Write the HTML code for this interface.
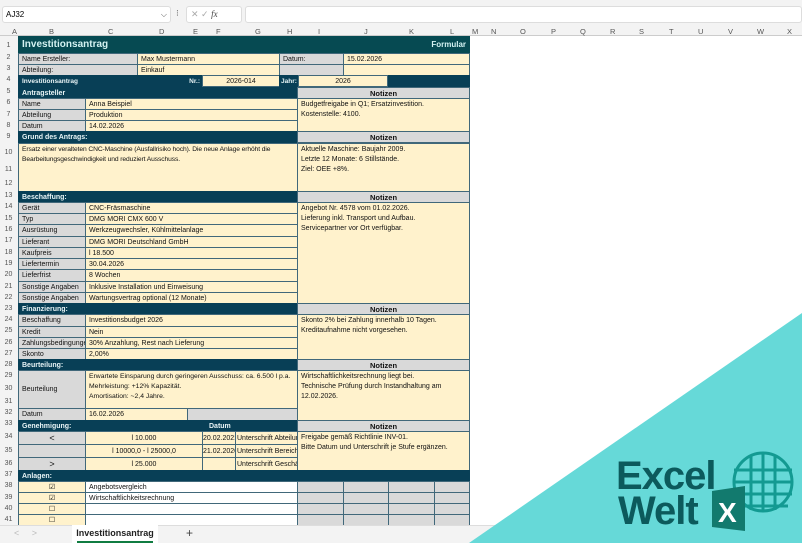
<!DOCTYPE html>
<html><head><meta charset="utf-8"><style>
*{margin:0;padding:0;box-sizing:border-box}
body{width:802px;height:543px;overflow:hidden;background:#fff;font-family:"Liberation Sans",sans-serif;position:relative}
.a{position:absolute}
.c{position:absolute;border:1px solid #41687a;font-size:7px;color:#111;padding:1px 3px;line-height:10px;white-space:nowrap;overflow:hidden}
.y{background:#fff2cc}.g{background:#d9d9d9}.w{background:#fff}
.d{background:#083f56;color:#e8f4f6;font-weight:bold;border-color:#083f56}
.n{text-align:center;font-weight:bold;font-size:7.5px}
.ce{text-align:center}
.rh{position:absolute;left:0;width:17px;font-size:7px;color:#555;text-align:center}
.ch{position:absolute;top:27px;font-size:7.5px;color:#555}
</style></head><body>
<div class="a" style="left:0;top:0;width:802px;height:36px;background:#f3f3f3"></div>
<div class="a" style="left:2px;top:6px;width:169px;height:17px;background:#fff;border:1px solid #ddd;border-radius:3px;font-size:8px;padding:3px 3px">AJ32<span style="float:right;color:#555">⌵</span></div>
<div class="a" style="left:176px;top:8px;font-size:9px;color:#666">⁝</div>
<div class="a" style="left:186px;top:6px;width:56px;height:17px;background:#fff;border:1px solid #ddd;border-radius:3px;font-size:9px;color:#aaa;padding:2px 4px">✕ ✓ <i style="color:#444;font-family:'Liberation Serif'">fx</i></div>
<div class="a" style="left:245px;top:6px;width:557px;height:17px;background:#fff;border:1px solid #ddd;border-radius:3px"></div>
<div class="a" style="left:0;top:35px;width:802px;height:1px;background:#ccc"></div>
<div class="ch" style="left:12px">A</div><div class="ch" style="left:49px">B</div><div class="ch" style="left:108px">C</div><div class="ch" style="left:159px">D</div><div class="ch" style="left:193px">E</div><div class="ch" style="left:216px">F</div><div class="ch" style="left:255px">G</div><div class="ch" style="left:287px">H</div><div class="ch" style="left:318px">I</div><div class="ch" style="left:364px">J</div><div class="ch" style="left:409px">K</div><div class="ch" style="left:450px">L</div><div class="ch" style="left:472px">M</div><div class="ch" style="left:491px">N</div><div class="ch" style="left:520px">O</div><div class="ch" style="left:551px">P</div><div class="ch" style="left:580px">Q</div><div class="ch" style="left:610px">R</div><div class="ch" style="left:639px">S</div><div class="ch" style="left:669px">T</div><div class="ch" style="left:698px">U</div><div class="ch" style="left:728px">V</div><div class="ch" style="left:757px">W</div><div class="ch" style="left:787px">X</div>
<div class="a" style="left:0;top:36px;width:18px;height:489px;background:#f3f3f3"></div>
<div class="rh" style="top:42px">1</div><div class="rh" style="top:54px">2</div><div class="rh" style="top:65px">3</div><div class="rh" style="top:76px">4</div><div class="rh" style="top:88px">5</div><div class="rh" style="top:99px">6</div><div class="rh" style="top:111px">7</div><div class="rh" style="top:122px">8</div><div class="rh" style="top:133px">9</div><div class="rh" style="top:149px">10</div><div class="rh" style="top:166px">11</div><div class="rh" style="top:180px">12</div><div class="rh" style="top:192px">13</div><div class="rh" style="top:203px">14</div><div class="rh" style="top:215px">15</div><div class="rh" style="top:226px">16</div><div class="rh" style="top:237px">17</div><div class="rh" style="top:249px">18</div><div class="rh" style="top:260px">19</div><div class="rh" style="top:271px">20</div><div class="rh" style="top:283px">21</div><div class="rh" style="top:294px">22</div><div class="rh" style="top:305px">23</div><div class="rh" style="top:316px">24</div><div class="rh" style="top:327px">25</div><div class="rh" style="top:339px">26</div><div class="rh" style="top:350px">27</div><div class="rh" style="top:361px">28</div><div class="rh" style="top:372px">29</div><div class="rh" style="top:385px">30</div><div class="rh" style="top:398px">31</div><div class="rh" style="top:409px">32</div><div class="rh" style="top:420px">33</div><div class="rh" style="top:433px">34</div><div class="rh" style="top:447px">35</div><div class="rh" style="top:460px">36</div><div class="rh" style="top:471px">37</div><div class="rh" style="top:482px">38</div><div class="rh" style="top:494px">39</div><div class="rh" style="top:505px">40</div><div class="rh" style="top:516px">41</div>

<div class="c d" style="left:18px;top:36px;width:452px;height:17px;background:#064a52;border-color:#064a52;font-size:10px;line-height:14px;color:#d4f2f2">Investitionsantrag<span style="float:right;font-size:8px">Formular</span></div>
<div class="c g" style="left:18px;top:53px;width:120px;height:12px">Name Ersteller:</div>
<div class="c y" style="left:137px;top:53px;width:143px;height:12px">Max Mustermann</div>
<div class="c g" style="left:279px;top:53px;width:65px;height:12px">Datum:</div>
<div class="c y" style="left:343px;top:53px;width:127px;height:12px">15.02.2026</div>
<div class="c g" style="left:18px;top:64px;width:120px;height:12px">Abteilung:</div>
<div class="c y" style="left:137px;top:64px;width:143px;height:12px">Einkauf</div>
<div class="c g" style="left:279px;top:64px;width:65px;height:12px"></div>
<div class="c y" style="left:343px;top:64px;width:127px;height:12px"></div>
<div class="c d" style="left:18px;top:75px;width:452px;height:12px;font-size:6.5px">Investitionsantrag</div>
<div class="c d" style="left:180px;top:75px;width:22px;height:12px;font-size:6.5px;text-align:right;padding:1px 1px">Nr.:</div>
<div class="c y" style="left:202px;top:75px;width:78px;height:12px;text-align:center">2026-014</div>
<div class="c d" style="left:279px;top:75px;width:20px;height:12px;font-size:6.5px;padding:1px 1px">Jahr:</div>
<div class="c y" style="left:298px;top:75px;width:90px;height:12px;text-align:center">2026</div>

<div class="c d" style="left:18px;top:87px;width:280px;height:11px;font-size:7px;line-height:9px">Antragsteller</div>
<div class="c g n" style="left:297px;top:87px;width:173px;height:12px">Notizen</div>
<div class="c g" style="left:18px;top:98px;width:68px;height:12px">Name</div><div class="c y" style="left:85px;top:98px;width:213px;height:12px">Anna Beispiel</div>
<div class="c g" style="left:18px;top:109px;width:68px;height:12px">Abteilung</div><div class="c y" style="left:85px;top:109px;width:213px;height:12px">Produktion</div>
<div class="c g" style="left:18px;top:120px;width:68px;height:12px">Datum</div><div class="c y" style="left:85px;top:120px;width:213px;height:12px">14.02.2026</div>
<div class="c y" style="left:297px;top:98px;width:173px;height:34px">Budgetfreigabe in Q1; Ersatzinvestition.<br>Kostenstelle: 4100.</div>

<div class="c d" style="left:18px;top:131px;width:280px;height:12px;font-size:7px">Grund des Antrags:</div>
<div class="c g n" style="left:297px;top:131px;width:173px;height:12px">Notizen</div>
<div class="c y" style="left:18px;top:143px;width:280px;height:49px;font-size:6.7px;letter-spacing:-0.1px">Ersatz einer veralteten CNC-Maschine (Ausfallrisiko hoch). Die neue Anlage erhöht die<br>Bearbeitungsgeschwindigkeit und reduziert Ausschuss.</div>
<div class="c y" style="left:297px;top:143px;width:173px;height:49px">Aktuelle Maschine: Baujahr 2009.<br>Letzte 12 Monate: 6 Stillstände.<br>Ziel: OEE +8%.</div>

<div class="c d" style="left:18px;top:191px;width:280px;height:12px;font-size:7px">Beschaffung:</div>
<div class="c g n" style="left:297px;top:191px;width:173px;height:12px">Notizen</div>
<div class="c g" style="left:18px;top:202px;width:68px;height:12px">Gerät</div><div class="c y" style="left:85px;top:202px;width:213px;height:12px">CNC-Fräsmaschine</div>
<div class="c g" style="left:18px;top:213px;width:68px;height:12px">Typ</div><div class="c y" style="left:85px;top:213px;width:213px;height:12px">DMG MORI CMX 600 V</div>
<div class="c g" style="left:18px;top:224px;width:68px;height:13px">Ausrüstung</div><div class="c y" style="left:85px;top:224px;width:213px;height:13px">Werkzeugwechsler, Kühlmittelanlage</div>
<div class="c g" style="left:18px;top:236px;width:68px;height:12px">Lieferant</div><div class="c y" style="left:85px;top:236px;width:213px;height:12px">DMG MORI Deutschland GmbH</div>
<div class="c g" style="left:18px;top:247px;width:68px;height:12px">Kaufpreis</div><div class="c y" style="left:85px;top:247px;width:213px;height:12px">l 18.500</div>
<div class="c g" style="left:18px;top:258px;width:68px;height:12px">Liefertermin</div><div class="c y" style="left:85px;top:258px;width:213px;height:12px">30.04.2026</div>
<div class="c g" style="left:18px;top:269px;width:68px;height:13px">Lieferfrist</div><div class="c y" style="left:85px;top:269px;width:213px;height:13px">8 Wochen</div>
<div class="c g" style="left:18px;top:281px;width:68px;height:12px">Sonstige Angaben</div><div class="c y" style="left:85px;top:281px;width:213px;height:12px">Inklusive Installation und Einweisung</div>
<div class="c g" style="left:18px;top:292px;width:68px;height:12px">Sonstige Angaben</div><div class="c y" style="left:85px;top:292px;width:213px;height:12px">Wartungsvertrag optional (12 Monate)</div>
<div class="c y" style="left:297px;top:202px;width:173px;height:102px">Angebot Nr. 4578 vom 01.02.2026.<br>Lieferung inkl. Transport und Aufbau.<br>Servicepartner vor Ort verfügbar.</div>

<div class="c d" style="left:18px;top:303px;width:280px;height:12px;font-size:7px">Finanzierung:</div>
<div class="c g n" style="left:297px;top:303px;width:173px;height:12px">Notizen</div>
<div class="c g" style="left:18px;top:314px;width:68px;height:13px">Beschaffung</div><div class="c y" style="left:85px;top:314px;width:213px;height:13px">Investitionsbudget 2026</div>
<div class="c g" style="left:18px;top:326px;width:68px;height:12px">Kredit</div><div class="c y" style="left:85px;top:326px;width:213px;height:12px">Nein</div>
<div class="c g" style="left:18px;top:337px;width:68px;height:12px;padding-right:0">Zahlungsbedingungen</div><div class="c y" style="left:85px;top:337px;width:213px;height:12px">30% Anzahlung, Rest nach Lieferung</div>
<div class="c g" style="left:18px;top:348px;width:68px;height:12px">Skonto</div><div class="c y" style="left:85px;top:348px;width:213px;height:12px">2,00%</div>
<div class="c y" style="left:297px;top:314px;width:173px;height:46px">Skonto 2% bei Zahlung innerhalb 10 Tagen.<br>Kreditaufnahme nicht vorgesehen.</div>

<div class="c d" style="left:18px;top:359px;width:280px;height:12px;font-size:7px">Beurteilung:</div>
<div class="c g n" style="left:297px;top:359px;width:173px;height:12px">Notizen</div>
<div class="c g" style="left:18px;top:370px;width:68px;height:39px;line-height:35px">Beurteilung</div>
<div class="c y" style="left:85px;top:370px;width:213px;height:39px;font-size:6.8px">Erwartete Einsparung durch geringeren Ausschuss: ca. 6.500 l p.a.<br>Mehrleistung: +12% Kapazität.<br>Amortisation: ~2,4 Jahre.</div>
<div class="c g" style="left:18px;top:408px;width:68px;height:13px">Datum</div>
<div class="c y" style="left:85px;top:408px;width:103px;height:13px">16.02.2026</div>
<div class="c g" style="left:187px;top:408px;width:111px;height:13px"></div>
<div class="c y" style="left:297px;top:370px;width:173px;height:51px">Wirtschaftlichkeitsrechnung liegt bei.<br>Technische Prüfung durch Instandhaltung am<br>12.02.2026.</div>

<div class="c d" style="left:18px;top:420px;width:280px;height:12px;font-size:7px">Genehmigung:<span style="position:absolute;left:190px">Datum</span></div>
<div class="c g n" style="left:297px;top:420px;width:173px;height:12px">Notizen</div>
<div class="c g ce" style="left:18px;top:431px;width:68px;height:14px;font-size:9px">&lt;</div>
<div class="c y ce" style="left:85px;top:431px;width:118px;height:14px;line-height:12px">l 10.000</div>
<div class="c y" style="left:202px;top:431px;width:34px;height:14px;padding:1px 0;line-height:12px">20.02.2021</div>
<div class="c y" style="left:235px;top:431px;width:63px;height:14px;padding:1px 1px;line-height:12px">Unterschrift Abteilung</div>
<div class="c g" style="left:18px;top:444px;width:68px;height:14px"></div>
<div class="c y ce" style="left:85px;top:444px;width:118px;height:14px;line-height:12px">l 10000,0 - l 25000,0</div>
<div class="c y" style="left:202px;top:444px;width:34px;height:14px;padding:1px 0;line-height:12px">21.02.2026</div>
<div class="c y" style="left:235px;top:444px;width:63px;height:14px;padding:1px 1px;line-height:12px">Unterschrift Bereich:</div>
<div class="c g ce" style="left:18px;top:457px;width:68px;height:14px;font-size:9px">&gt;</div>
<div class="c y ce" style="left:85px;top:457px;width:118px;height:14px;line-height:12px">l 25.000</div>
<div class="c y" style="left:202px;top:457px;width:34px;height:14px"></div>
<div class="c y" style="left:235px;top:457px;width:63px;height:14px;padding:1px 1px;line-height:12px">Unterschrift Geschäft</div>
<div class="c y" style="left:297px;top:431px;width:173px;height:40px">Freigabe gemäß Richtlinie INV-01.<br>Bitte Datum und Unterschrift je Stufe ergänzen.</div>

<div class="c d" style="left:18px;top:470px;width:452px;height:12px;font-size:7px">Anlagen:</div>
<div class="c y ce" style="left:18px;top:481px;width:68px;height:12px">☑</div><div class="c w" style="left:85px;top:481px;width:213px;height:12px">Angebotsvergleich</div>
<div class="c y ce" style="left:18px;top:492px;width:68px;height:12px">☑</div><div class="c w" style="left:85px;top:492px;width:213px;height:12px">Wirtschaftlichkeitsrechnung</div>
<div class="c y ce" style="left:18px;top:503px;width:68px;height:12px">☐</div><div class="c w" style="left:85px;top:503px;width:213px;height:12px"></div>
<div class="c y ce" style="left:18px;top:514px;width:68px;height:12px">☐</div><div class="c w" style="left:85px;top:514px;width:213px;height:12px"></div>
<div class="a" style="left:297px;top:481px;width:173px;height:45px;background:#d9d9d9;border:1px solid #41687a;
background-image:linear-gradient(#41687a,#41687a),linear-gradient(#41687a,#41687a),linear-gradient(#41687a,#41687a),linear-gradient(#41687a,#41687a),linear-gradient(#41687a,#41687a),linear-gradient(#41687a,#41687a);
background-size:1px 100%,1px 100%,1px 100%,100% 1px,100% 1px,100% 1px;background-repeat:no-repeat;background-position:45px 0,90px 0,136px 0,0 10px,0 21px,0 32px"></div>

<div class="a" style="left:0;top:525px;width:802px;height:18px;background:#f3f3f3;border-top:1px solid #ddd"></div>
<div class="a" style="left:14px;top:528px;font-size:9px;color:#bbb">&lt;&nbsp;&nbsp;&nbsp;&nbsp;&nbsp;&gt;</div>
<div class="a" style="left:72px;top:525px;width:86px;height:18px;background:#fff;font-size:9px;font-weight:bold;color:#222;text-align:center;padding-top:3px">Investitionsantrag<div style="position:absolute;left:5px;right:5px;bottom:0;height:2px;background:#107c41"></div></div>
<div class="a" style="left:186px;top:526px;font-size:12px;color:#444">+</div>

<svg class="a" style="left:0;top:0" width="802" height="543">
<polygon points="802,313 469,543 802,543" fill="#66d9d8"/>
<text x="616" y="489" font-family="Liberation Sans" font-weight="bold" font-size="40" fill="#0c5a5c" letter-spacing="-1">Excel</text>
<text x="618" y="524" font-family="Liberation Sans" font-weight="bold" font-size="40" fill="#0c5a5c" letter-spacing="-1">Welt</text>
<g stroke="#139a92" stroke-width="3" fill="none">
<circle cx="763" cy="482" r="29"/>
<line x1="734" y1="470" x2="792" y2="470"/><line x1="734" y1="482" x2="792" y2="482"/><line x1="734" y1="494" x2="792" y2="494"/><line x1="738" y1="506" x2="788" y2="506"/>
<line x1="751" y1="455" x2="751" y2="510"/><line x1="763" y1="453" x2="763" y2="511"/><line x1="775" y1="455" x2="775" y2="510"/>
</g>
<path d="M712,491 L745,486 L745,531 L712,527 Z" fill="#127a6e"/>
<text x="718" y="522" font-family="Liberation Sans" font-weight="bold" font-size="28" fill="#fff">X</text>
</svg>
</body></html>
